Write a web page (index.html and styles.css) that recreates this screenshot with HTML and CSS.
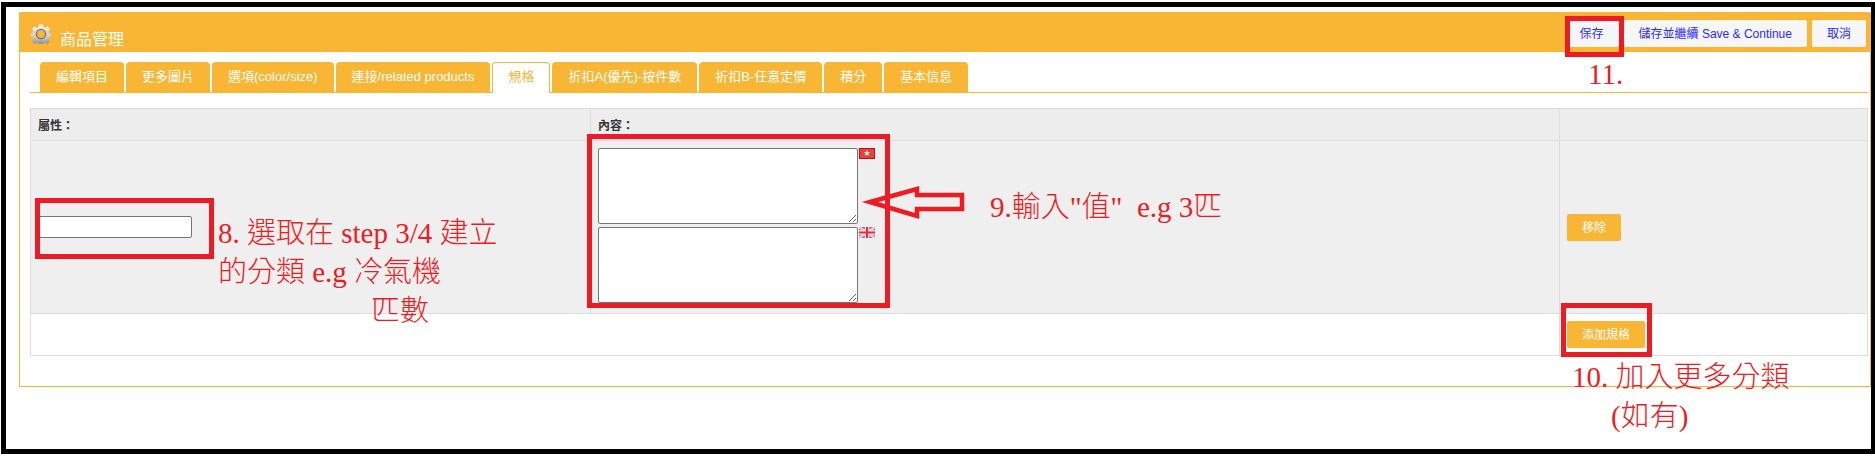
FILE: index.html
```html
<!DOCTYPE html>
<html lang="zh-Hant">
<head>
    <meta charset="UTF-8">
    <title>商品管理</title>
    <link rel="stylesheet" href="styles.css">
</head>
<body>
    <div class="frame">
        <div class="panel">
            <div class="panel-head">
                <div class="panel-title">
                    <svg class="gear" width="20" height="20" viewBox="0 0 20 20">
                        <defs>
                            <linearGradient id="gearFill" x1="0" y1="0" x2="0" y2="1">
                                <stop offset="0" stop-color="#f4f4f4"/>
                                <stop offset="0.6" stop-color="#c9c9c9"/>
                                <stop offset="1" stop-color="#7d7d7d"/>
                            </linearGradient>
                        </defs>
                        <path fill="url(#gearFill)" d="M8 0.5h4l0.5 2.6 1.7 0.7 2.2-1.5 2.7 2.7-1.5 2.2 0.7 1.7 2.2 0.5v3.6l-2.2 0.5-0.7 1.7 1.3 2.2-2.7 2.6-2.2-1.4-1.5 0.7-0.5 2.6h-4l-0.5-2.6-1.5-0.7-2.2 1.4-2.7-2.6 1.3-2.2-0.7-1.7-2.2-0.5v-3.6l2.2-0.5 0.7-1.7-1.5-2.2 2.7-2.7 2.2 1.5 1.7-0.7z"/>
                        <circle cx="10" cy="10" r="4.6" fill="#f9b634" stroke="#777" stroke-width="1.4"/>
                    </svg>
                    <span>商品管理</span>
                </div>
                <div class="head-actions">
                    <a class="btn-light">保存</a>
                    <a class="btn-light">儲存並繼續 Save &amp; Continue</a>
                    <a class="btn-light">取消</a>
                </div>
            </div>

            <div class="panel-body">
                <ul class="tabs">
                    <li>編輯項目</li>
                    <li>更多圖片</li>
                    <li>選項(color/size)</li>
                    <li>連接/related products</li>
                    <li class="active">規格</li>
                    <li>折扣A(優先)-按件數</li>
                    <li>折扣B-任意定價</li>
                    <li>積分</li>
                    <li>基本信息</li>
                </ul>

                <table class="spec-table">
                    <colgroup>
                        <col class="col-name">
                        <col class="col-value">
                        <col>
                    </colgroup>
                    <thead>
                        <tr>
                            <th>屬性：</th>
                            <th>內容：</th>
                            <th></th>
                        </tr>
                    </thead>
                    <tbody>
                        <tr class="spec-row">
                            <td><input class="spec-input" type="text"></td>
                            <td>
                                <div class="lang-row">
                                    <textarea></textarea>
                                    <svg class="flag" width="16" height="11" viewBox="0 0 16 11">
                                        <rect x="0.5" y="0.5" width="15" height="10" fill="#e8403c" stroke="#c4100f"/>
                                        <path fill="#fbe3e0" d="M8 2l0.9 2.1 2.2 0.1-1.7 1.5 0.6 2.2-2-1.2-2 1.2 0.6-2.2-1.7-1.5 2.2-0.1z"/>
                                    </svg>
                                </div>
                                <div class="lang-row">
                                    <textarea></textarea>
                                    <svg class="flag" width="16" height="11" viewBox="0 0 16 11">
                                        <rect width="16" height="11" fill="#6470c4"/>
                                        <path stroke="#f6e6f0" stroke-width="2.6" d="M0 0L16 11M16 0L0 11"/>
                                        <path stroke="#f08a90" stroke-width="0.8" d="M0 0L16 11M16 0L0 11"/>
                                        <path stroke="#f8e8ee" stroke-width="4.4" d="M8 0V11M0 5.5H16"/>
                                        <path stroke="#ee2a30" stroke-width="2.2" d="M8 0V11M0 5.5H16"/>
                                    </svg>
                                </div>
                            </td>
                            <td><a class="btn-orange">移除</a></td>
                        </tr>
                        <tr class="add-row">
                            <td colspan="2"></td>
                            <td><a class="btn-orange">添加規格</a></td>
                        </tr>
                    </tbody>
                </table>
            </div>
        </div>
    </div>

    <!-- red annotations drawn over the screenshot -->
    <div class="mark mark-save"></div>
    <div class="mark mark-input"></div>
    <div class="mark mark-text"></div>
    <div class="mark mark-add"></div>

    <svg class="arrow" width="110" height="42" viewBox="0 0 110 42">
        <path fill="none" stroke="#ed1c24" stroke-width="4.5" d="M10 20L57 7V13H102V27H57V34Z"/>
    </svg>

    <div class="note note-8">8. 選取在 step 3/4 建立<br>的分類 e.g 冷氣機<br><span class="note-indent">匹數</span></div>
    <div class="note note-9">9.輸入"值"&nbsp; e.g 3匹</div>
    <div class="note note-10">10. 加入更多分類<br><span class="note-indent">(如有)</span></div>
    <div class="note note-11">11.</div>
</body>
</html>
```

FILE: styles.css
```css
* {
    margin: 0;
    padding: 0;
    box-sizing: border-box;
}

body {
    position: relative;
    height: 457px;
    overflow: hidden;
    background: #fff;
    font-family: "Liberation Sans", "Noto Sans CJK TC", sans-serif;
    font-size: 12px;
    color: #333;
}

.frame {
    width: 1874px;
    height: 452px;
    margin: 2px 0 0 1px;
    padding: 5px 0 0 13px;
    border: 5px solid #000;
    border-right-width: 4px;
}

.panel {
    border: 1px solid #f9b634;
    border-top: none;
}

.panel-head {
    display: flex;
    justify-content: space-between;
    height: 40px;
    margin: 0 -1px;
    background: #f9b634;
    border-radius: 3px 3px 0 0;
}

.panel-title {
    display: flex;
    align-items: center;
    gap: 9px;
    padding: 11px 0 0 12px;
    font-size: 16px;
    color: #fff;
}

.gear {
    margin-bottom: 7px;
}

.head-actions {
    display: flex;
    gap: 5px;
    padding: 8px 5px 0 0;
}

.btn-light,
.btn-orange {
    display: inline-block;
    height: 27px;
    padding: 0 15px;
    line-height: 29px;
    font-size: 12px;
    border-radius: 2px;
}

.btn-light {
    background: #f6f6f6;
    color: #2b2bff;
}

.btn-orange {
    background: #f9b634;
    color: #fff;
    vertical-align: middle;
}

.panel-body {
    padding: 10px 2px 30px 10px;
}

.tabs {
    display: flex;
    gap: 2px;
    height: 31px;
    padding-left: 10px;
    list-style: none;
    border-bottom: 1px solid #f9b634;
}

.tabs li {
    height: 30px;
    padding: 0 16px;
    line-height: 30px;
    font-size: 13px;
    color: #fff;
    background: #f9b634;
    border-radius: 4px 4px 0 0;
}

.tabs li.active {
    height: 31px;
    padding: 0 15px;
    line-height: 28px;
    color: #f9b634;
    background: #fff;
    border: 1px solid #f9b634;
    border-bottom: none;
}

.spec-table {
    width: 100%;
    margin-top: 15px;
    table-layout: fixed;
    border-collapse: collapse;
}

.col-name {
    width: 560px;
}

.col-value {
    width: 969px;
}

.spec-table th,
.spec-table td {
    padding: 0 7px;
    border: 1px solid #ddd;
    text-align: left;
    vertical-align: middle;
}

.spec-table th {
    height: 32px;
    font-size: 12px;
    font-weight: bold;
    background: #ededed;
}

.spec-row td {
    padding-top: 7px;
    padding-bottom: 7px;
    background: #efefef;
}

.add-row td {
    height: 42px;
}

.spec-input {
    display: block;
    width: 154px;
    height: 22px;
    border: 1px solid #767676;
    border-radius: 2px;
    background: #fff;
}

.lang-row {
    display: flex;
    align-items: flex-start;
    gap: 1px;
    margin-bottom: 3px;
}

.lang-row textarea {
    display: block;
    width: 260px;
    height: 76px;
    border: 1px solid #767676;
    border-radius: 2px;
    background: #fff;
}

.flag {
    display: block;
}

.mark {
    position: absolute;
    border: 5px solid #ed1c24;
}

.mark-save {
    left: 1565px;
    top: 16px;
    width: 59px;
    height: 41px;
}

.mark-input {
    left: 35px;
    top: 198px;
    width: 179px;
    height: 61px;
}

.mark-text {
    left: 587px;
    top: 134px;
    width: 303px;
    height: 174px;
}

.mark-add {
    left: 1561px;
    top: 303px;
    width: 91px;
    height: 54px;
}

.arrow {
    position: absolute;
    left: 860px;
    top: 182px;
}

.note {
    position: absolute;
    font-family: "Liberation Serif", "Noto Sans CJK TC", serif;
    font-size: 29px;
    font-weight: 300;
    line-height: 39px;
    white-space: nowrap;
    color: #ed1c24;
}

.note-8 {
    left: 218px;
    top: 214px;
}

.note-8 .note-indent {
    margin-left: 153px;
}

.note-9 {
    left: 990px;
    top: 188px;
}

.note-10 {
    left: 1572px;
    top: 358px;
}

.note-10 .note-indent {
    margin-left: 39px;
}

.note-11 {
    left: 1588px;
    top: 55px;
}
```
